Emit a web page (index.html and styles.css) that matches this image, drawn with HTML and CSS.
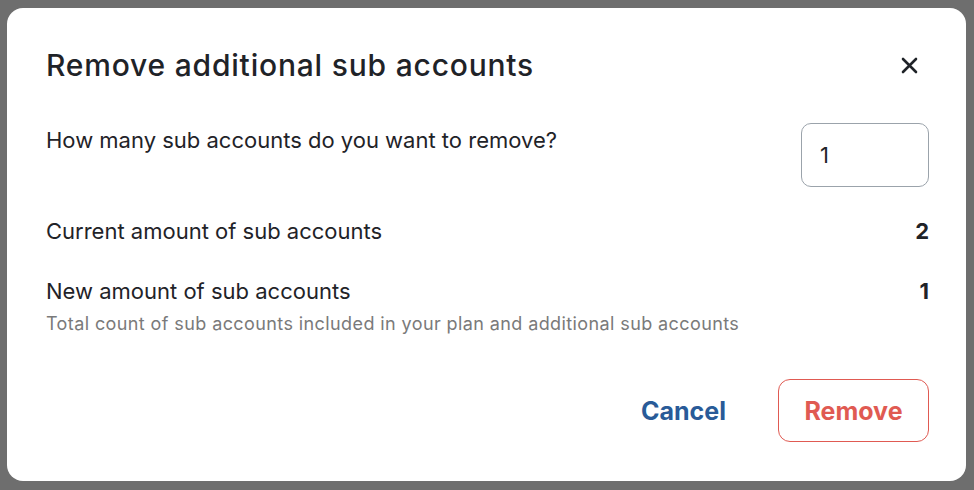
FILE: index.html
```html
<!DOCTYPE html>
<html lang="en">
<head>
    <meta charset="UTF-8">
    <meta name="viewport" content="width=device-width, initial-scale=1.0">
    <title>Remove additional sub accounts</title>
    <link rel="stylesheet" href="styles.css">
</head>
<body>
    <div class="modal">
        <div class="modal-header">
            <h2>Remove additional sub accounts</h2>
            <button type="button" class="close-button" aria-label="Close">
                <svg width="17" height="17" viewBox="0 0 17 17">
                    <path d="M2 2 L15 15 M15 2 L2 15" stroke="#1f2328" stroke-width="2.6" stroke-linecap="round"/>
                </svg>
            </button>
        </div>

        <div class="row row-input">
            <label for="removeCount">How many sub accounts do you want to remove?</label>
            <input type="text" id="removeCount" class="count-input" value="1">
        </div>

        <div class="row row-current">
            <span>Current amount of sub accounts</span>
            <span class="amount">2</span>
        </div>

        <div class="row row-new">
            <div>
                <span>New amount of sub accounts</span>
                <p class="hint">Total count of sub accounts included in your plan and additional sub accounts</p>
            </div>
            <span class="amount">1</span>
        </div>

        <div class="actions">
            <button type="button" class="cancel-button">Cancel</button>
            <button type="button" class="remove-button">Remove</button>
        </div>
    </div>
</body>
</html>
```

FILE: styles.css
```css
html, body {
    height: 100%;
}
body {
    margin: 0;
    padding: 8px 8px 9px 7px;
    box-sizing: border-box;
    background-color: #6e6e6e;
    font-family: Inter, "DejaVu Sans", sans-serif;
    color: #1f2328;
}
.modal {
    height: 100%;
    box-sizing: border-box;
    background-color: #fff;
    border-radius: 16px;
    padding: 37px 37px 0 39px;
}
.modal-header {
    display: flex;
    justify-content: space-between;
    align-items: center;
    height: 40px;
}
.modal-header h2 {
    margin: 0;
    font-size: 30px;
    line-height: 40px;
    font-weight: 500;
    letter-spacing: 0.8px;
}
.close-button {
    display: flex;
    background: none;
    border: none;
    padding: 0;
    margin-right: 11px;
    cursor: pointer;
}
.row {
    display: flex;
    justify-content: space-between;
    align-items: flex-start;
    font-size: 22px;
    line-height: 28px;
}
.row-input {
    margin-top: 38px;
}
.row-input label {
    padding-top: 3px;
}
.count-input {
    width: 128px;
    height: 64px;
    box-sizing: border-box;
    border: 1px solid #9ba3ab;
    border-radius: 10px;
    padding: 0 18px;
    font-family: inherit;
    font-size: 22px;
    color: #1f2328;
}
.row-current {
    margin-top: 30px;
}
.row-new {
    margin-top: 32px;
}
.amount {
    font-weight: 700;
}
.hint {
    margin: 7px 0 0;
    font-size: 18px;
    line-height: 24px;
    letter-spacing: 0.4px;
    color: #7a7a7a;
}
.actions {
    display: flex;
    justify-content: flex-end;
    align-items: center;
    gap: 52px;
    margin-top: 43px;
}
.cancel-button {
    background: none;
    border: none;
    padding: 0;
    font-family: inherit;
    font-size: 25px;
    font-weight: 700;
    color: #295b98;
    cursor: pointer;
}
.remove-button {
    width: 151px;
    height: 63px;
    background: #fff;
    border: 1px solid #e05a52;
    border-radius: 12px;
    font-family: inherit;
    font-size: 25px;
    font-weight: 700;
    color: #e05a52;
    cursor: pointer;
}
```
